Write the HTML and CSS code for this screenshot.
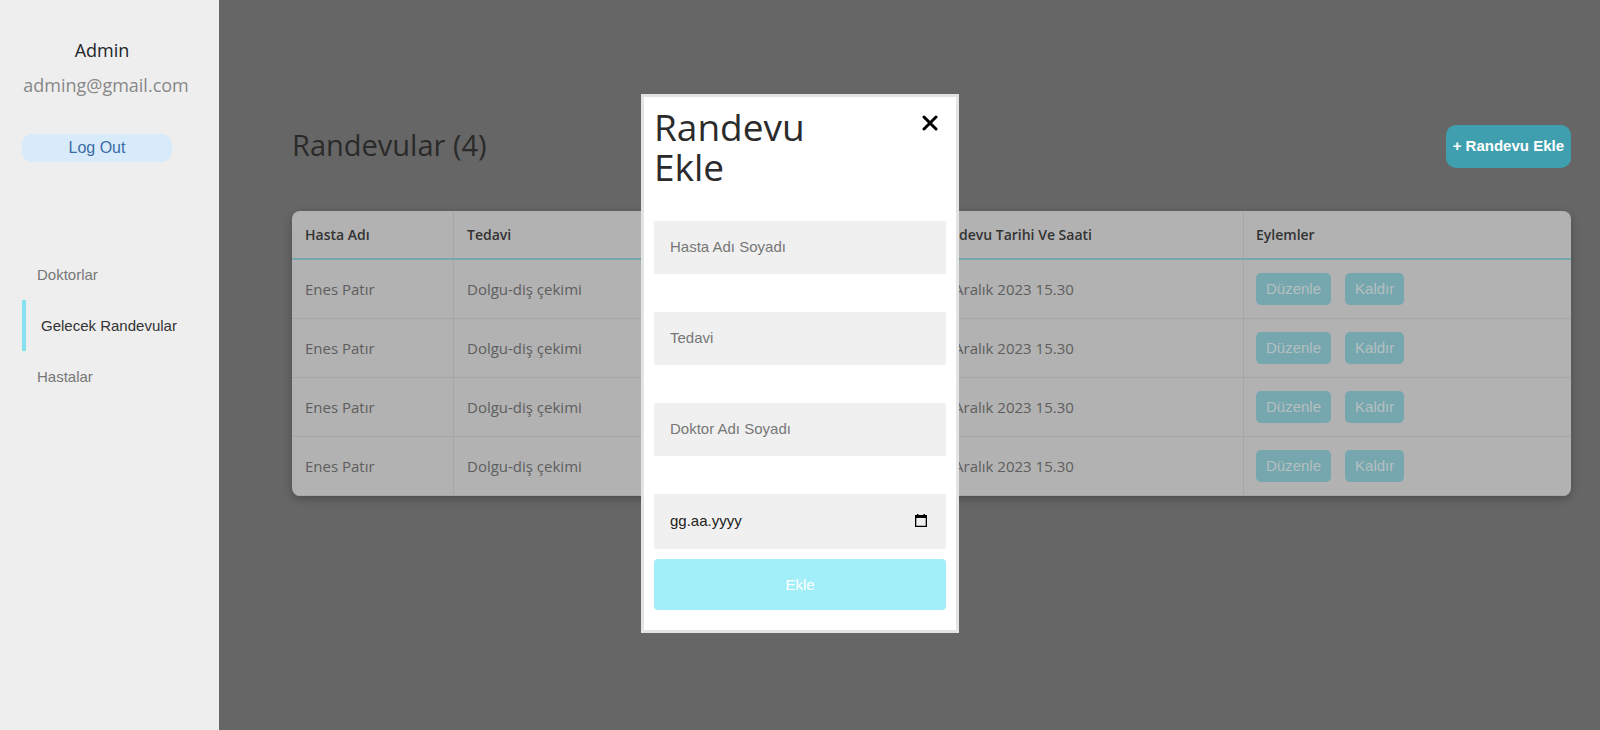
FILE: index.html
```html
<!DOCTYPE html>
<html lang="tr">
<head>
<meta charset="utf-8">
<title>Randevular</title>
<link rel="stylesheet" href="styles.css">
</head>
<body>
<div class="layout">
  <aside class="sidebar">
    <div class="profile">
      <p class="profile-name">Admin</p>
      <p class="profile-mail">adming@gmail.com</p>
    </div>
    <button class="logout" type="button">Log Out</button>
    <nav class="menu">
      <a class="menu-link" href="#">Doktorlar</a>
      <a class="menu-link menu-link-active" href="#">Gelecek Randevular</a>
      <a class="menu-link" href="#">Hastalar</a>
    </nav>
  </aside>
  <main class="content">
    <header class="content-head">
      <h2 class="content-title">Randevular (4)</h2>
      <button class="add-button" type="button">+ Randevu Ekle</button>
    </header>
    <div class="table-card">
      <table class="table">
        <colgroup>
          <col class="col-patient"><col class="col-treatment"><col class="col-doctor"><col class="col-date"><col class="col-actions">
        </colgroup>
        <thead>
          <tr><th>Hasta Adı</th><th>Tedavi</th><th>Doktor</th><th>Randevu Tarihi Ve Saati</th><th>Eylemler</th></tr>
        </thead>
        <tbody>
          <tr><td>Enes Patır</td><td>Dolgu-diş çekimi</td><td></td><td>15 Aralık 2023 15.30</td><td><div class="actions"><button class="action" type="button">Düzenle</button><button class="action" type="button">Kaldır</button></div></td></tr>
          <tr><td>Enes Patır</td><td>Dolgu-diş çekimi</td><td></td><td>15 Aralık 2023 15.30</td><td><div class="actions"><button class="action" type="button">Düzenle</button><button class="action" type="button">Kaldır</button></div></td></tr>
          <tr><td>Enes Patır</td><td>Dolgu-diş çekimi</td><td></td><td>15 Aralık 2023 15.30</td><td><div class="actions"><button class="action" type="button">Düzenle</button><button class="action" type="button">Kaldır</button></div></td></tr>
          <tr><td>Enes Patır</td><td>Dolgu-diş çekimi</td><td></td><td>15 Aralık 2023 15.30</td><td><div class="actions"><button class="action" type="button">Düzenle</button><button class="action" type="button">Kaldır</button></div></td></tr>
        </tbody>
      </table>
    </div>
  </main>
</div>
<div class="overlay">
  <div class="modal" role="dialog" aria-modal="true" aria-labelledby="modal-title">
    <div class="modal-head">
      <h1 class="modal-title" id="modal-title">Randevu Ekle</h1>
      <button class="close" type="button" aria-label="Kapat">
        <svg width="16" height="16" viewBox="0 0 16 16" aria-hidden="true"><path d="M2 2L14 14M14 2L2 14" fill="none" stroke="#000" stroke-width="3" stroke-linecap="round"/></svg>
      </button>
    </div>
    <form class="form">
      <input class="field" type="text" placeholder="Hasta Adı Soyadı" aria-label="Hasta Adı Soyadı">
      <input class="field" type="text" placeholder="Tedavi" aria-label="Tedavi">
      <input class="field" type="text" placeholder="Doktor Adı Soyadı" aria-label="Doktor Adı Soyadı">
      <div class="field date-field">
        <input class="date-input" type="text" placeholder="gg.aa.yyyy" aria-label="Randevu tarihi">
        <button class="date-button" type="button" aria-label="Takvimi aç">
          <svg width="12" height="13" viewBox="0 0 12 13" aria-hidden="true"><path d="M2 0h1.500v1h5V0H10v1h2v12H0V1h2zM1.300 4v7.700h9.400V4z" fill="#000" fill-rule="evenodd"/></svg>
        </button>
      </div>
      <button class="submit" type="submit">Ekle</button>
    </form>
  </div>
</div>
</body>
</html>
```
FILE: styles.css
```css
* { box-sizing: border-box; }
body {
  margin: 0;
  background: #666;
  color: #333;
  font-family: "Open Sans", sans-serif;
  font-size: 15px;
}
button, input { margin: 0; border: 0; font-family: "Liberation Sans", sans-serif; }
.layout { display: flex; min-height: 100vh; }

.sidebar {
  flex: none;
  width: 219px;
  padding: 38px 22px;
  background: #eee;
}
.profile { width: 160px; text-align: center; font-size: 18px; }
.profile p { margin: 0 0 10px; line-height: 25px; white-space: nowrap; }
.profile .profile-name { color: #212529; }
.profile .profile-mail { margin-right: -8px; color: #888; }
.logout {
  display: block;
  width: 150px;
  height: 28px;
  margin-top: 36px;
  border-radius: 10px;
  background: #d8ebfb;
  color: #3b6ca5;
  font-size: 16px;
}
.menu {
  display: flex;
  flex-direction: column;
  margin-top: 87px;
  font-family: "Liberation Sans", sans-serif;
}
.menu-link {
  padding: 0 15px;
  color: #777;
  line-height: 51px;
  text-decoration: none;
  white-space: nowrap;
}
.menu-link-active { border-left: 4px solid #84e1ed; color: #333; }

.content { flex: 1; min-width: 0; padding: 125px 29px 0 73px; }
.content-head {
  display: flex;
  align-items: center;
  justify-content: space-between;
  margin-bottom: 43px;
}
.content-title {
  margin: 0;
  padding-bottom: 4px;
  color: #2a2a2a;
  font-size: 29px;
  font-weight: 400;
  line-height: 34px;
}
.add-button {
  height: 43px;
  padding: 0 7px 2px;
  border-radius: 10px;
  background: #409fae;
  color: #fff;
  font-size: 15px;
  font-weight: 700;
}

.table-card {
  overflow: hidden;
  border-radius: 8px;
  background: #b2b2b2;
  box-shadow: 0 3px 8px rgba(0, 0, 0, 0.25);
}
.table { width: 100%; border-collapse: separate; border-spacing: 0; table-layout: fixed; }
.col-patient { width: 162px; }
.col-treatment { width: 240px; }
.col-doctor { width: 226px; }
.col-date { width: 324px; }
.table th, .table td {
  padding: 0 12px 0 13px;
  border-right: 1px solid #a6a6a6;
  border-bottom: 1px solid #a6a6a6;
  text-align: left;
}
.table th {
  height: 49px;
  border-bottom: 2px solid #76a5ac;
  color: #333;
  font-size: 14px;
  font-weight: 600;
}
.table td { height: 59px; padding-bottom: 1px; color: #5e5e5e; }
.table th:last-child, .table td:last-child { padding-left: 12px; border-right: 0; }
.actions { display: flex; gap: 14px; }
.action {
  height: 32px;
  padding: 0 10px;
  border-radius: 5px;
  background: #76a7ae;
  color: #b5bfc0;
  font-size: 15px;
}

.overlay {
  position: fixed;
  inset: 0;
  display: flex;
  align-items: center;
  justify-content: center;
  padding-bottom: 3px;
}
.modal {
  width: 318px;
  padding: 10px 10px 20px;
  border: 3px solid #e4e4e4;
  background: #fff;
}
.modal-head {
  display: flex;
  align-items: flex-start;
  justify-content: space-between;
  margin-bottom: 34px;
}
.modal-title {
  max-width: 200px;
  margin: 0;
  color: #2b2b2b;
  font-size: 37px;
  font-weight: 400;
  line-height: 40px;
}
.close { margin: 8px 8px 0 0; padding: 0; background: none; line-height: 0; }
.form { display: flex; flex-direction: column; }
.field {
  width: 100%;
  height: 53px;
  margin-bottom: 38px;
  padding: 0 16px 2px;
  background: #f0f0f0;
  color: #222;
  font-size: 15px;
}
.field::placeholder { color: #777; opacity: 1; }
.date-field { display: flex; align-items: center; height: 55px; margin-bottom: 10px; }
.date-input { flex: 1; min-width: 0; padding: 0; background: none; color: #222; font-size: 15px; }
.date-input::placeholder { color: #222; opacity: 1; }
.date-button { margin-right: 3px; padding: 0; background: none; line-height: 0; }
.submit {
  height: 51px;
  padding-bottom: 2px;
  border-radius: 4px;
  background: #a2effa;
  color: #fff;
  font-size: 15px;
}
```
